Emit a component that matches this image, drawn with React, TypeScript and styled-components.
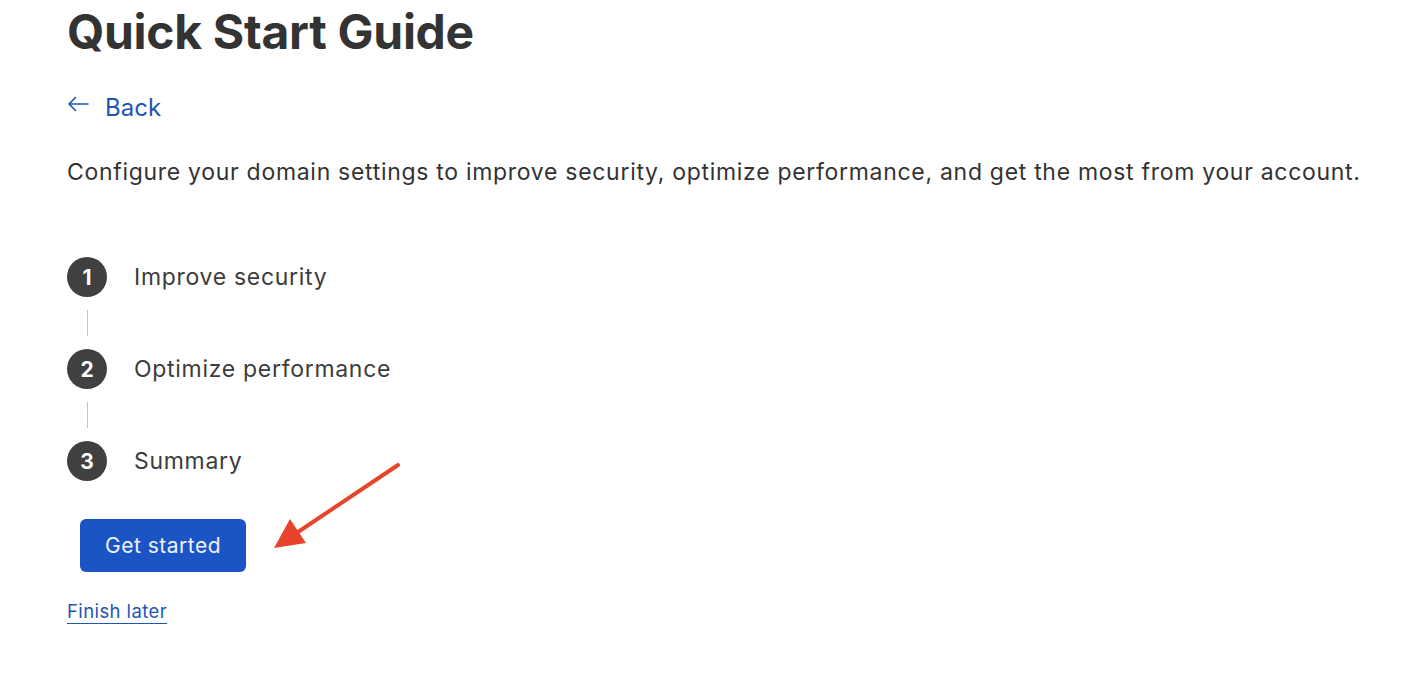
import { createGlobalStyle } from "styled-components";
import styled from "styled-components";

const GlobalStyle = createGlobalStyle`
  body {
    margin: 0;
    background: #ffffff;
    font-family: Inter, "Noto Sans", sans-serif;
    color: #333333;
  }
`;

const Page = styled.div`
  position: relative;
  width: 1420px;
  height: 684px;
  padding: 0 0 0 67px;
  box-sizing: border-box;
  overflow: hidden;
`;

const Title = styled.h1`
  margin: 0;
  padding-top: 2px;
  font-size: 48px;
  line-height: 60px;
  font-weight: 700;
  color: #333333;
  letter-spacing: -0.3px;
`;

const BackLink = styled.a`
  display: flex;
  align-items: center;
  gap: 16px;
  margin-top: 30px;
  color: #1f55b5;
  font-size: 24px;
  line-height: 32px;
  text-decoration: none;
  cursor: pointer;

  svg {
    margin-bottom: 8px;
  }
`;

const Description = styled.p`
  margin: 32px 0 0;
  font-size: 23px;
  line-height: 32px;
  letter-spacing: 0.7px;
  color: #333333;
`;

const Steps = styled.ol`
  list-style: none;
  margin: 69px 0 0;
  padding: 0;
  display: flex;
  flex-direction: column;
`;

const Step = styled.li`
  display: flex;
  align-items: center;
  gap: 27px;
  height: 40px;
`;

const Circle = styled.span`
  width: 40px;
  height: 40px;
  border-radius: 50%;
  background: #404040;
  color: #ffffff;
  font-weight: 700;
  font-size: 21px;
  display: flex;
  align-items: center;
  justify-content: center;
  flex-shrink: 0;
`;

const StepLabel = styled.span`
  font-size: 23px;
  letter-spacing: 0.7px;
  color: #3c3c3c;
`;

const Connector = styled.div`
  width: 1px;
  height: 26px;
  margin: 13px 0 13px 20px;
  background: #c4c4c4;
`;

const PrimaryButton = styled.button`
  margin: 38px 0 0 13px;
  width: 166px;
  height: 53px;
  border: none;
  border-radius: 6px;
  background: #1b55c5;
  color: #eef2fb;
  font-family: Inter, "Noto Sans", sans-serif;
  font-size: 21px;
  letter-spacing: 0.5px;
  cursor: pointer;
`;

const FinishLater = styled.a`
  display: inline-block;
  margin-top: 28px;
  font-size: 18.5px;
  letter-spacing: 0.4px;
  color: #1f55b5;
  text-decoration: underline;
  text-underline-offset: 5px;
  cursor: pointer;
`;

const Pointer = styled.svg`
  position: absolute;
  left: 268px;
  top: 460px;
`;

const steps = ["Improve security", "Optimize performance", "Summary"];

export default function App() {
  return (
    <>
      <GlobalStyle />
      <Page>
        <Title>Quick Start Guide</Title>
        <BackLink>
          <svg width="22" height="16" viewBox="0 0 22 16" fill="none">
            <path
              d="M21 8H2M8.5 1.5L2 8l6.5 6.5"
              stroke="#1f55b5"
              strokeWidth="1.6"
              strokeLinecap="round"
              strokeLinejoin="round"
            />
          </svg>
          Back
        </BackLink>
        <Description>
          Configure your domain settings to improve security, optimize
          performance, and get the most from your account.
        </Description>
        <Steps>
          {steps.map((s, i) => (
            <div key={s}>
              <Step>
                <Circle>{i + 1}</Circle>
                <StepLabel>{s}</StepLabel>
              </Step>
              {i < steps.length - 1 && <Connector />}
            </div>
          ))}
        </Steps>
        <div>
          <PrimaryButton>Get started</PrimaryButton>
        </div>
        <FinishLater>Finish later</FinishLater>
        <Pointer width="140" height="100" viewBox="0 0 140 100">
          <line
            x1="130"
            y1="5"
            x2="30"
            y2="72"
            stroke="#e8432b"
            strokeWidth="4"
            strokeLinecap="round"
          />
          <polygon points="6,88 22,59 38,83" fill="#e8432b" />
        </Pointer>
      </Page>
    </>
  );
}
